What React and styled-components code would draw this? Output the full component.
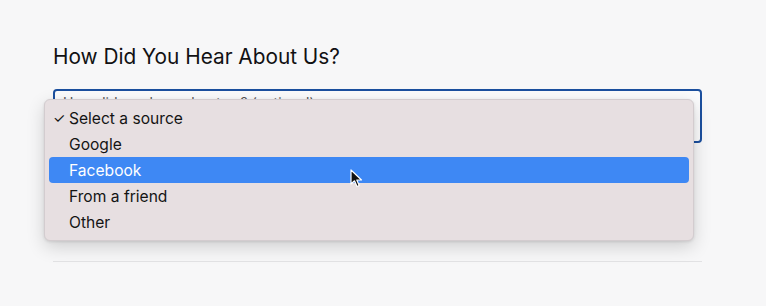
import styled, { createGlobalStyle } from "styled-components";

const Global = createGlobalStyle`
  html, body {
    margin: 0;
    background: #f7f7f8;
    font-family: Inter, "Noto Sans", sans-serif;
    -webkit-font-smoothing: antialiased;
  }
`;

const Page = styled.div`
  width: 766px;
  height: 306px;
  overflow: hidden;
  padding: 43px 0 0 53px;
  box-sizing: border-box;
  position: relative;
`;

const Section = styled.section`
  width: 649px;
  display: flex;
  flex-direction: column;
`;

const Title = styled.h2`
  margin: 0 0 18px;
  font-size: 20.8px;
  line-height: 28px;
  font-weight: 400;
  color: #111113;
`;

const Field = styled.div`
  position: relative;
  margin-bottom: 118px;
`;

const SelectBox = styled.div`
  height: 54px;
  box-sizing: border-box;
  border: 2px solid #1b4f9e;
  border-radius: 4px;
  background: #fbfbfc;
  padding: 3px 8px;
  font-size: 14px;
  line-height: 18px;
  color: #555;
`;

const Menu = styled.ul`
  position: absolute;
  left: -9px;
  top: 10px;
  width: 650px;
  box-sizing: border-box;
  margin: 0;
  padding: 5px 4px 5px;
  list-style: none;
  background: #e7dfe1;
  border-radius: 6px;
  border: 1px solid #d3cccf;
  box-shadow: 0 6px 18px rgba(0, 0, 0, 0.16), 0 1px 3px rgba(0, 0, 0, 0.1);
`;

const Item = styled.li`
  position: relative;
  height: 26px;
  display: flex;
  align-items: center;
  padding-left: 20px;
  border-radius: 4px;
  font-size: 15.6px;
  color: ${(p) => (p.$active ? "#ffffff" : "#141414")};
  background: ${(p) => (p.$active ? "#3e88f4" : "transparent")};
`;

const Check = styled.span`
  position: absolute;
  left: 4px;
  top: 0;
  line-height: 26px;
  font-size: 14px;
`;

const Divider = styled.hr`
  margin: 0;
  border: 0;
  border-top: 1px solid #e2e2e4;
`;

const Cursor = styled.svg`
  position: absolute;
  left: 350px;
  top: 169px;
`;

const options = ["Select a source", "Google", "Facebook", "From a friend", "Other"];

export default function App() {
  return (
    <Page>
      <Global />
      <Section>
        <Title>How Did You Hear About Us?</Title>
        <Field>
          <SelectBox>How did you hear about us? (optional)</SelectBox>
          <Menu>
            {options.map((o, i) => (
              <Item key={o} $active={o === "Facebook"}>
                {i === 0 && <Check>✓</Check>}
                {o}
              </Item>
            ))}
          </Menu>
        </Field>
        <Divider />
      </Section>
      <Cursor width="13" height="19" viewBox="0 0 13 19">
        <path d="M1 1 L1 15 L4.5 11.8 L7 17.5 L9.2 16.5 L6.8 11 L11.5 11 Z" fill="#111" stroke="#fff" strokeWidth="1.2" strokeLinejoin="round" />
      </Cursor>
    </Page>
  );
}
